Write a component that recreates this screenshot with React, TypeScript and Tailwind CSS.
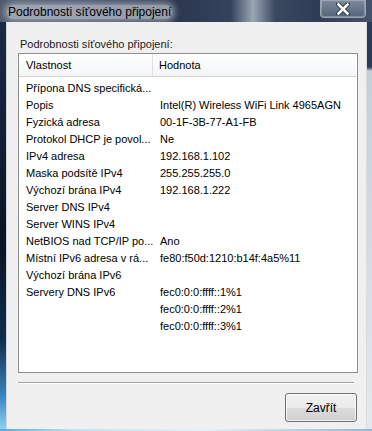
const rows: [string, string][] = [
  ["Přípona DNS specifická...", ""],
  ["Popis", "Intel(R) Wireless WiFi Link 4965AGN"],
  ["Fyzická adresa", "00-1F-3B-77-A1-FB"],
  ["Protokol DHCP je povol...", "Ne"],
  ["IPv4 adresa", "192.168.1.102"],
  ["Maska podsítě IPv4", "255.255.255.0"],
  ["Výchozí brána IPv4", "192.168.1.222"],
  ["Server DNS IPv4", ""],
  ["Server WINS IPv4", ""],
  ["NetBIOS nad TCP/IP po...", "Ano"],
  ["Místní IPv6 adresa v rá...", "fe80:f50d:1210:b14f:4a5%11"],
  ["Výchozí brána IPv6", ""],
  ["Servery DNS IPv6", "fec0:0:0:ffff::1%1"],
  ["", "fec0:0:0:ffff::2%1"],
  ["", "fec0:0:0:ffff::3%1"],
];

export default function App() {
  return (
    <div className="w-[372px] h-[431px] overflow-hidden flex flex-col font-['Liberation_Sans',sans-serif] text-[11px] text-black bg-[#0d1829]">
      {/* Title bar (glass) */}
      <div className="h-[22px] flex items-start bg-[linear-gradient(to_right,#4f596c_0%,#46526a_20%,#2c3850_48%,#34425c_62%,#9aa6b4_68%,#3a4860_74%,#2f3c56_85%,#44536b_100%)]">
        <div className="pl-[7px] pt-[4px]">
          <span className="inline-block text-[12px] leading-[14px] px-[1px] rounded-[6px] bg-[#bfc5ce]/70 shadow-[0_0_6px_3px_rgba(190,197,207,0.6)]">
            Podrobnosti síťového připojení
          </span>
        </div>
        <div className="flex-1" />
        <div className="mr-[6px] w-[46px] h-[18px] rounded-b-[4px] border border-t-0 border-[#9aa3b0] bg-[linear-gradient(to_bottom,#7d8a9c,#55637a)] flex items-center justify-center shadow-[inset_0_0_0_1px_rgba(255,255,255,0.25)]">
          <svg width="14" height="12" viewBox="0 0 14 12">
            <path d="M2 1 L12 11 M12 1 L2 11" stroke="#2a3344" strokeWidth="4.5" strokeLinecap="round" />
            <path d="M2.5 1.5 L11.5 10.5 M11.5 1.5 L2.5 10.5" stroke="#ffffff" strokeWidth="2.6" strokeLinecap="square" />
          </svg>
        </div>
      </div>

      {/* Body */}
      <div className="flex flex-1">
        <div className="w-[7px] bg-[linear-gradient(to_bottom,#1a2a44_0%,#0b1424_55%,#102c4c_78%,#3b86c0_92%,#8fd0f0_100%)] border-r border-[#cfd6de]" />

        <div className="w-[359px] h-[407px] bg-[#f0f0f0] flex flex-col pl-[11px] pr-[9px]">
          <div className="pt-[15px] pl-[2px] leading-[14px] text-[#1a1a1a]">Podrobnosti síťového připojení:</div>

          <div className="mt-[2px] w-[340px] h-[320px] border border-[#8e8f8f] bg-white flex flex-col">
            <div className="h-[23px] mr-[1px] flex items-stretch bg-[linear-gradient(to_bottom,#ffffff,#f4f5f7)] border-b border-[#d5d5d5]">
              <div className="w-[134px] pl-[7px] flex items-center border-r border-[#dee0e3]">Vlastnost</div>
              <div className="flex-1 pl-[6px] flex items-center">Hodnota</div>
            </div>
            <div className="pt-[3px] flex flex-col">
              {rows.map(([k, v], i) => (
                <div key={i} className="h-[17px] flex items-center whitespace-nowrap">
                  <div className="w-[134px] pl-[7px] overflow-hidden">{k}</div>
                  <div className="pl-[7px]">{v}</div>
                </div>
              ))}
            </div>
          </div>

          <div className="mt-[9px] w-[336px] h-[2px] border-t border-[#a0a0a0] border-b border-b-white" />

          <div className="flex justify-end mt-[9px]">
            <button className="w-[72px] h-[29px] rounded-[3px] border border-[#707070] bg-[linear-gradient(to_bottom,#f2f2f2_0%,#ebebeb_50%,#dddddd_51%,#cfcfcf_100%)] shadow-[inset_0_0_0_1px_rgba(255,255,255,0.7)] text-[12px]">
              Zavřít
            </button>
          </div>
        </div>

        <div className="flex-1 bg-[linear-gradient(to_bottom,#2d3a55_0px,#2d3a55_45px,#c4cfd8_49px,#e4e9ed_100%)] border-l border-[#d7dde2]" />
      </div>

      <div className="h-[2px] bg-[linear-gradient(to_right,#5aa8dc_0%,#bfe3f5_20%,#e2f2fa_55%,#8fb8d8_100%)]" />
    </div>
  );
}
